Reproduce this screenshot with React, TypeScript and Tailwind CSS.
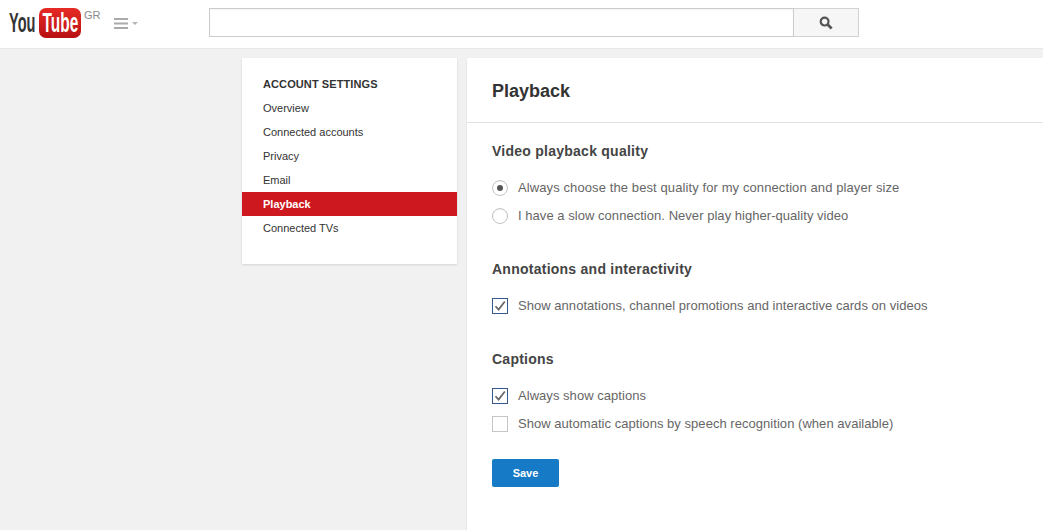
import React from "react";

function Logo() {
  return (
    <div className="flex items-center w-[72px] h-[30px] mt-[8px] ml-[9px]">
      <div className="w-[30px] h-[30px] flex items-center justify-start shrink-0">
        <span className="shrink-0 inline-block origin-left scale-x-[0.52] text-[28px] leading-[30px] font-bold text-[#333]">You</span>
      </div>
      <div className="w-[42px] h-[30px] shrink-0 rounded-[7px] bg-gradient-to-b from-[#e62a26] to-[#b80f12] flex items-center justify-center">
        <span className="shrink-0 inline-block scale-x-[0.55] text-[28px] leading-[30px] font-bold text-white">Tube</span>
      </div>
    </div>
  );
}

function Radio({ checked }: { checked?: boolean }) {
  return (
    <span className="w-[16px] h-[16px] rounded-full border border-[#c4c4c4] bg-white flex items-center justify-center shrink-0 shadow-[inset_0_1px_1px_rgba(0,0,0,0.06)]">
      {checked && <span className="w-[6px] h-[6px] rounded-full bg-[#555]" />}
    </span>
  );
}

function Check({ checked }: { checked?: boolean }) {
  return (
    <span className={`relative w-[16px] h-[16px] border bg-white shrink-0 ${checked ? "border-[#36588f]" : "border-[#c6c6c6]"}`}>
      {checked && (
        <svg width="14" height="14" viewBox="0 0 14 14" className="absolute left-0 top-0">
          <path d="M2.5 7.2 L5.6 10.6 L11.8 2.6" fill="none" stroke="#666" strokeWidth="1.7" />
        </svg>
      )}
    </span>
  );
}

function Opt({ control, label, wide }: { control: React.ReactNode; label: string; wide?: boolean }) {
  return (
    <div className="flex items-center h-[28px] gap-[10px]">
      {control}
      <span className={`text-[13px] text-[#666] ${wide ? "tracking-[0.1px]" : "tracking-[0.04px]"}`}>{label}</span>
    </div>
  );
}

function Heading({ children }: { children: React.ReactNode }) {
  return <h3 className="text-[14px] leading-[18px] font-bold text-[#444] tracking-[0.25px]">{children}</h3>;
}

const items = ["Overview", "Connected accounts", "Privacy", "Email", "Playback", "Connected TVs"];

export default function App() {
  return (
    <div className="w-[1043px] h-[530px] overflow-hidden bg-[#f1f1f1] font-['Liberation_Sans',Arial,sans-serif] flex flex-col">
      <header className="h-[49px] shrink-0 bg-white border-b border-[#e8e8e8] flex items-start relative">
        <Logo />
        <span className="absolute left-[84px] top-[9px] text-[11px] leading-[13px] text-[#8a8a8a]">GR</span>
        <div className="flex items-center gap-[4px] ml-[33px] mt-[18px]">
          <svg width="14" height="11" viewBox="0 0 14 11">
            <path d="M0 1h14M0 5.5h14M0 10h14" stroke="#aaa" strokeWidth="2" />
          </svg>
          <span className="w-0 h-0 border-x-[3px] border-x-transparent border-t-[3px] border-t-[#b5b5b5]" />
        </div>
        <div className="flex ml-[71px] mt-[8px] h-[29px]">
          <div className="w-[585px] bg-white border border-[#ccc] shadow-[inset_0_1px_2px_rgba(0,0,0,0.05)]" />
          <button className="w-[65px] bg-[#f6f6f6] border border-l-0 border-[#d3d3d3] flex items-center justify-center">
            <svg width="14" height="14" viewBox="0 0 14 14">
              <circle cx="5.6" cy="5.6" r="3.9" fill="none" stroke="#555" strokeWidth="2.2" />
              <path d="M8.6 8.6 L12.6 12.6" stroke="#555" strokeWidth="2.8" />
            </svg>
          </button>
        </div>
      </header>
      <div className="flex-1 flex gap-[10px] pl-[242px] pt-[9px] min-h-0">
        <nav className="w-[215px] h-[206px] bg-white shadow-[0_1px_2px_rgba(0,0,0,0.12)] pt-[19px]">
          <div className="pl-[21px] text-[11px] leading-[14px] font-bold text-[#333] tracking-[0.1px]">ACCOUNT SETTINGS</div>
          <ul className="mt-[5px]">
            {items.map((t) => (
              <li
                key={t}
                className={`h-[24px] pl-[21px] text-[11px] leading-[24px] ${t === "Playback" ? "bg-[#cc181e] text-white font-bold" : "text-[#333]"}`}
              >
                {t}
              </li>
            ))}
          </ul>
        </nav>
        <main className="flex-1 bg-white shadow-[0_1px_2px_rgba(0,0,0,0.1)]">
          <div className="h-[65px] border-b border-[#e2e2e2] pl-[25px] pt-[21px]">
            <h1 className="text-[18px] leading-[24px] font-bold text-[#333]">Playback</h1>
          </div>
          <div className="pl-[25px] pt-[19px]">
            <Heading>Video playback quality</Heading>
            <div className="mt-[14px]">
              <Opt wide control={<Radio checked />} label="Always choose the best quality for my connection and player size" />
              <Opt control={<Radio />} label="I have a slow connection. Never play higher-quality video" />
            </div>
            <div className="mt-[30px]"><Heading>Annotations and interactivity</Heading></div>
            <div className="mt-[14px]">
              <Opt control={<Check checked />} label="Show annotations, channel promotions and interactive cards on videos" />
            </div>
            <div className="mt-[30px]"><Heading>Captions</Heading></div>
            <div className="mt-[14px]">
              <Opt control={<Check checked />} label="Always show captions" />
              <Opt control={<Check />} label="Show automatic captions by speech recognition (when available)" />
            </div>
            <button className="mt-[21px] w-[67px] h-[28px] rounded-[2px] bg-[#167ac6] text-white text-[11px] font-bold flex items-center justify-center">Save</button>
          </div>
        </main>
      </div>
    </div>
  );
}
